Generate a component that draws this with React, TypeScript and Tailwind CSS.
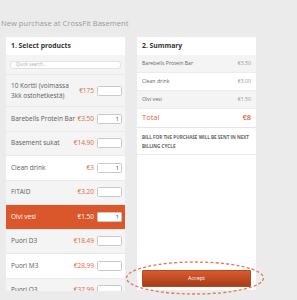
import React from "react"

type Product = {
  name: string
  price: string
  qty?: string
  bg: "gray" | "white" | "active"
  tall?: boolean
}

const products: Product[] = [
  { name: "10 Kortti (voimassa 3kk ostohetkestä)", price: "€175", bg: "gray", tall: true },
  { name: "Barebells Protein Bar", price: "€3.50", qty: "1", bg: "gray" },
  { name: "Basement sukat", price: "€14.90", bg: "gray" },
  { name: "Clean drink", price: "€3", qty: "1", bg: "white" },
  { name: "FITAID", price: "€3.20", bg: "gray" },
  { name: "Olvi vesi", price: "€1.50", qty: "1", bg: "active" },
  { name: "Puori D3", price: "€18.49", bg: "gray" },
  { name: "Puori M3", price: "€28.99", bg: "white" },
  { name: "Puori O3", price: "€37.99", bg: "gray" },
]

const summary = [
  { name: "Barebells Protein Bar", price: "€3.50", bg: "bg-[#f4f4f4]" },
  { name: "Clean drink", price: "€3.00", bg: "bg-white" },
  { name: "Olvi vesi", price: "€1.50", bg: "bg-[#f4f4f4]" },
]

function ProductRow({ p }: { p: Product }) {
  const active = p.bg === "active"
  const rowBg = active ? "bg-[#d9572b]" : p.bg === "white" ? "bg-white" : "bg-[#f4f4f4]"
  return (
    <div
      className={`flex items-center shrink-0 pl-[5px] pr-[3px] border-b border-[#e8e8e8] ${rowBg} ${
        p.tall ? "h-[32px]" : "h-[24.5px]"
      }`}
    >
      <div
        className={`flex-1 text-[6.5px] leading-[10px] ${active ? "text-white" : "text-[#5c5c5c]"} ${
          p.tall ? "pr-[8px]" : ""
        }`}
      >
        {p.name}
      </div>
      <span className={`text-[6.5px] mr-[3px] ${active ? "text-white" : "text-[#e4683a]"}`}>{p.price}</span>
      <div className="w-[25px] h-[10px] bg-white border border-[#c9c9c9] rounded-[1.5px] flex items-center justify-end pr-[2px] text-[5.5px] text-[#333]">
        {p.qty}
      </div>
    </div>
  )
}

export default function App() {
  return (
    <div className="relative w-[297px] h-[300px] overflow-hidden bg-[#ebebeb] font-['Open_Sans',sans-serif]">
      <div className="pt-[18px] pl-[1px] h-[37px] text-[7.6px] text-[#9a9a9a]">New purchase at CrossFit Basement</div>

      <div className="flex gap-[12px] pl-[6px]">
        {/* left: product list */}
        <div className="w-[119px] h-[254px] bg-white flex flex-col overflow-hidden">
          <div className="h-[18px] shrink-0 flex items-center pl-[5px] text-[6.8px] font-bold text-[#333]">
            1. Select products
          </div>
          <div className="h-[20px] shrink-0 bg-[#f4f4f4] border-b border-[#e8e8e8] flex items-center px-[4px]">
            <div className="w-full h-[8px] bg-white rounded-[3px] border border-[#e2e2e2] flex items-center pl-[5px] text-[4.5px] text-[#aaa]">
              Quick search...
            </div>
          </div>
          {products.map((p) => (
            <ProductRow key={p.name} p={p} />
          ))}
        </div>

        {/* right: summary */}
        <div className="w-[119px] h-[253px] bg-white flex flex-col">
          <div className="h-[18px] shrink-0 flex items-center pl-[5px] text-[6.8px] font-bold text-[#333]">
            2. Summary
          </div>
          {summary.map((s) => (
            <div
              key={s.name}
              className={`h-[18px] shrink-0 flex items-center justify-between px-[5px] border-b border-[#ebebeb] text-[5.2px] ${s.bg}`}
            >
              <span className="text-[#666]">{s.name}</span>
              <span className="text-[#999]">{s.price}</span>
            </div>
          ))}
          <div className="h-[19px] shrink-0 flex items-center justify-between px-[5px] border-b border-[#e6e6e6] text-[7.5px] text-[#e4683a]">
            <span>Total</span>
            <span className="font-semibold">€8</span>
          </div>
          <div className="h-[27px] shrink-0 px-[5px] pt-[5px] border-b border-[#ececec] text-[4.6px] leading-[9px] font-bold uppercase text-[#666]">
            Bill for the purchase will be sent in next billing cycle
          </div>
          <div className="flex-1" />
          <div className="px-[5px] pb-[3px]">
            <button className="w-full h-[17px] rounded-[1px] border border-[#b44a22] bg-gradient-to-b from-[#d95b2b] to-[#a63e1b] text-white text-[5.5px] flex items-center justify-center">
              Accept
            </button>
          </div>
        </div>
      </div>

      <svg className="absolute left-[125px] top-[260px]" width="142" height="37" viewBox="0 0 142 37">
        <ellipse cx="70" cy="18" rx="68.5" ry="16" fill="none" stroke="#e8735a" strokeWidth="1.3" strokeDasharray="3 2.2" />
      </svg>
    </div>
  )
}
